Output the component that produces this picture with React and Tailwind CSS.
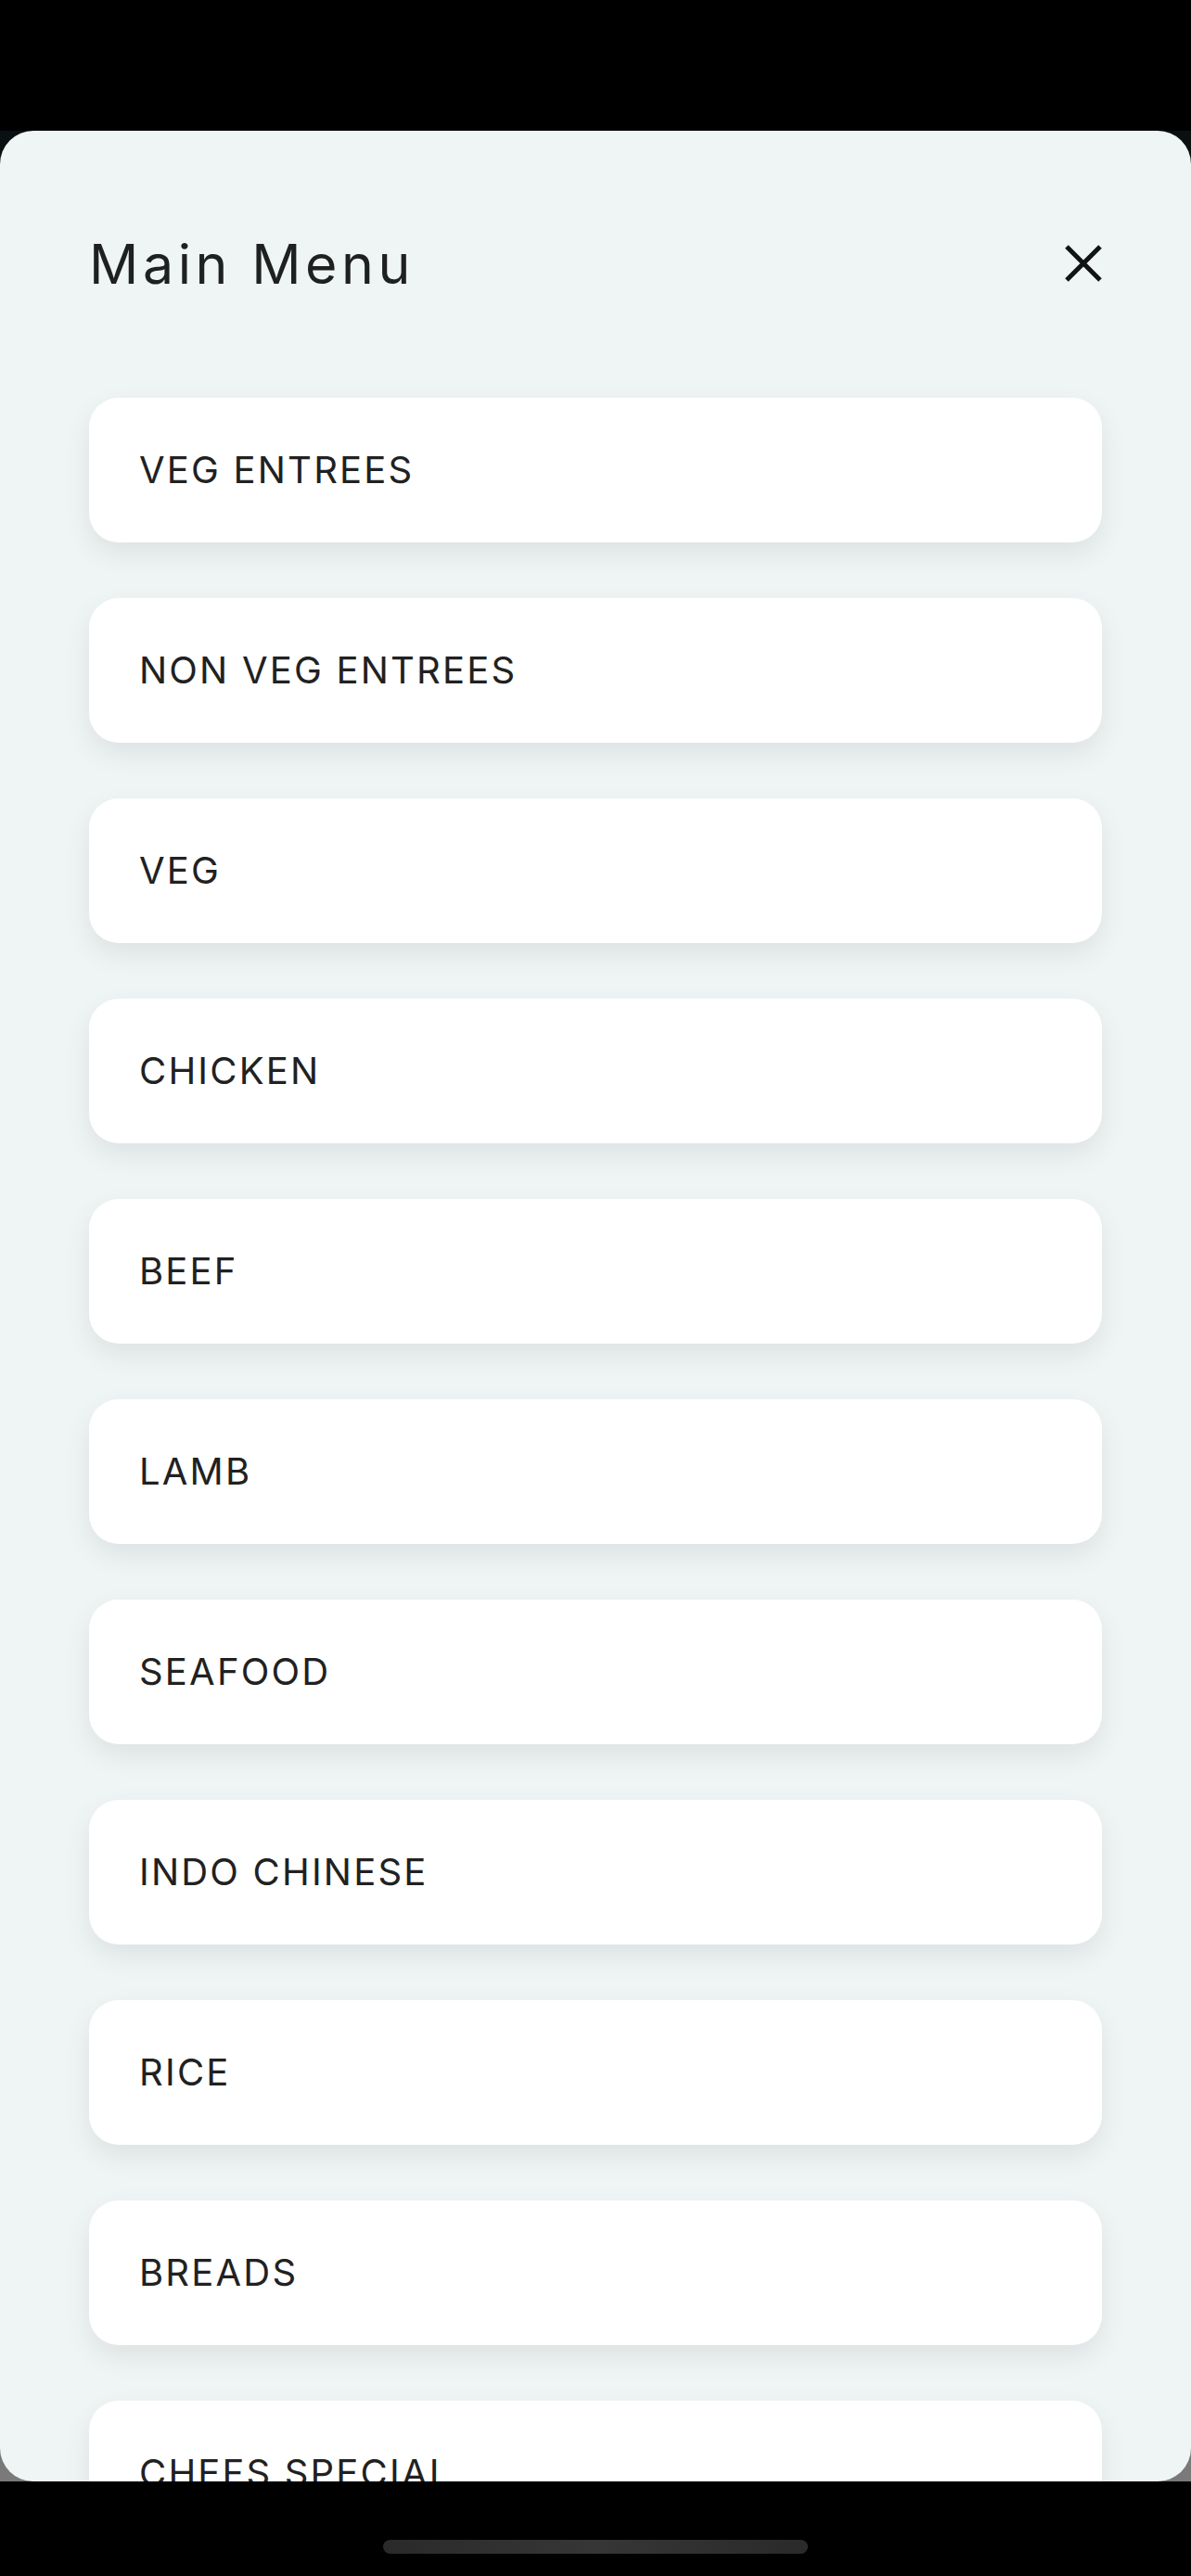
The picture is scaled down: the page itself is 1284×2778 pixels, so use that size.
import React from 'react';

const items = [
  'VEG ENTREES',
  'NON VEG ENTREES',
  'VEG',
  'CHICKEN',
  'BEEF',
  'LAMB',
  'SEAFOOD',
  'INDO CHINESE',
  'RICE',
  'BREADS',
  'CHEFS SPECIAL',
];

export default function App() {
  return (
    <div
      className="w-[1284px] h-[2778px] bg-black flex flex-col overflow-hidden"
      style={{ fontFamily: 'Inter, "Noto Sans", sans-serif' }}
    >
      <div className="h-[141px] shrink-0 bg-black" />

      {/* dimmed page behind the sheet */}
      <div className="h-[2535px] shrink-0 bg-gradient-to-b from-[#0a0f12] to-[#7a7a7a]">
        <div className="h-full rounded-[36px] bg-[#eff5f5] overflow-hidden">
          <div className="flex items-center justify-between h-[80px] mt-[103px] px-[96px]">
            <h1 className="text-[59px] leading-none font-normal tracking-[4.6px] text-[#1e2120]">
              Main Menu
            </h1>
            <button className="w-[44px] h-[44px] flex items-center justify-center -mr-[2px]">
              <svg viewBox="0 0 44 44" className="w-[44px] h-[44px]" fill="none" stroke="#111314" strokeWidth="5">
                <path d="M4 4L40 40M40 4L4 40" />
              </svg>
            </button>
          </div>

          <div className="flex flex-col gap-[60px] mt-[105px] px-[96px]">
            {items.map((label) => (
              <div
                key={label}
                className="h-[156px] shrink-0 rounded-[32px] bg-white flex items-center pl-[54px] shadow-[0_12px_30px_rgba(0,0,0,0.08)]"
              >
                <span className="text-[40px] leading-none tracking-[2.2px] text-[#212121]">{label}</span>
              </div>
            ))}
          </div>
        </div>
      </div>

      <div className="flex-1 bg-black flex justify-center pt-[63px]">
        <div className="w-[458px] h-[15px] rounded-full bg-gradient-to-r from-[#2a2a2a] via-[#363636] to-[#2a2a2a]" />
      </div>
    </div>
  );
}
